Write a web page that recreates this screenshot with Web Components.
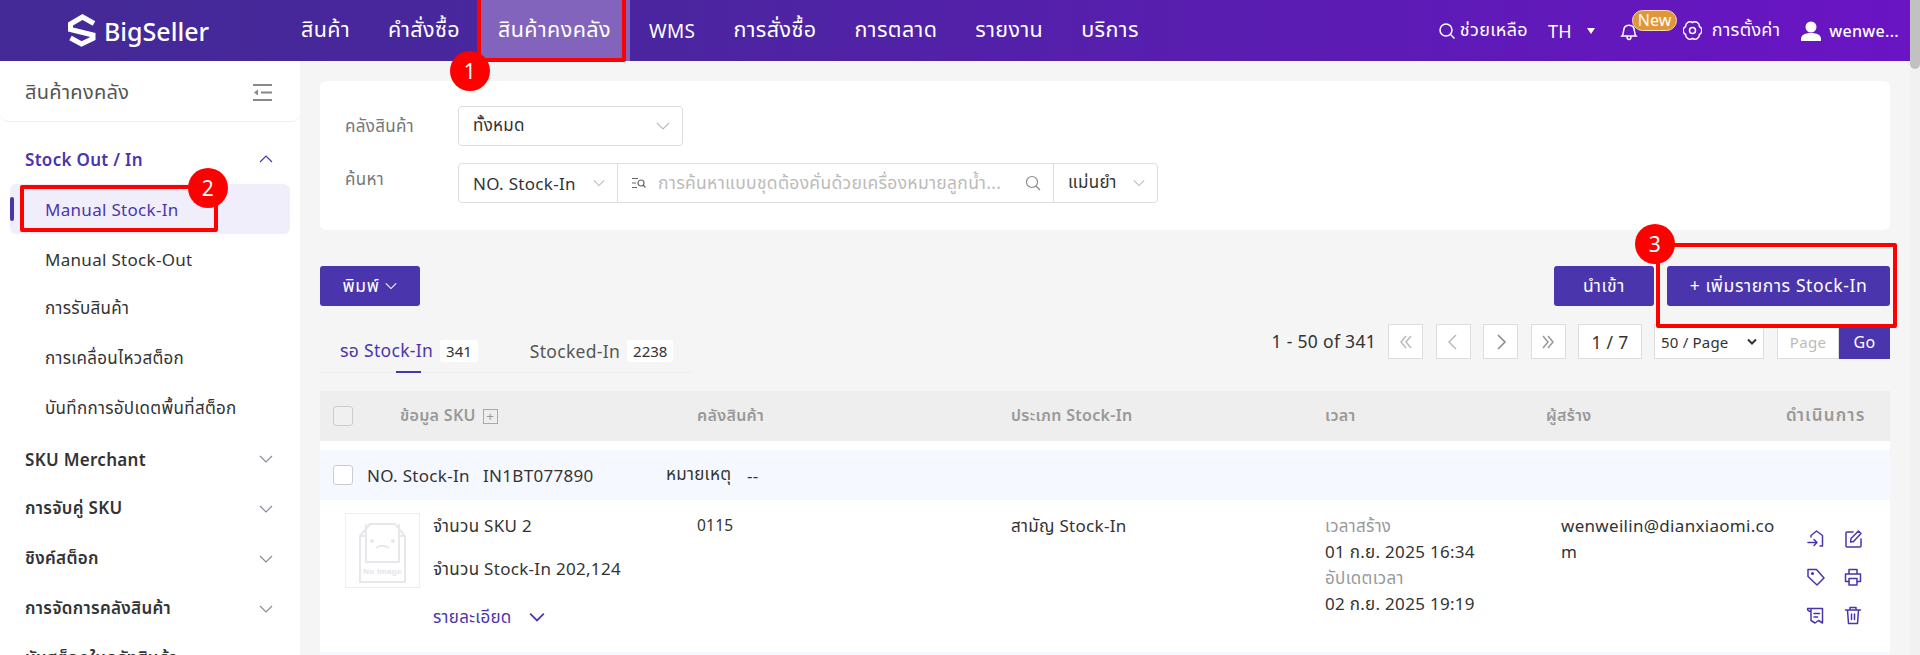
<!DOCTYPE html>
<html lang="th">
<head>
<meta charset="utf-8">
<title>BigSeller</title>
<style>
  html, body { margin: 0; height: 655px; overflow: hidden; }
  body { font-family: "Noto Sans", "Noto Sans Thai", Inter, sans-serif; font-size: 17px; letter-spacing: .3px; color: #333; background: #f5f5f5; }
  #app { display: flex; height: 655px; }
  #page { flex: 1; min-width: 0; display: flex; flex-direction: column; }
  #body { flex: 1; display: flex; min-height: 0; }
  #main { flex: 1; min-width: 0; padding: 20px 20px 0; display: flex; flex-direction: column; overflow: hidden; }
</style>
</head>
<body>
<div id="app">
  <div id="page">
    <top-bar></top-bar>
    <div id="body">
      <side-bar title="สินค้าคงคลัง">
        <side-group label="Stock Out / In" open></side-group>
        <side-item active>Manual Stock-In</side-item>
        <side-item>Manual Stock-Out</side-item>
        <side-item>การรับสินค้า</side-item>
        <side-item>การเคลื่อนไหวสต็อก</side-item>
        <side-item>บันทึกการอัปเดตพื้นที่สต็อก</side-item>
        <side-group label="SKU Merchant"></side-group>
        <side-group label="การจับคู่ SKU"></side-group>
        <side-group label="ชิงค์สต็อก"></side-group>
        <side-group label="การจัดการคลังสินค้า"></side-group>
        <side-group label="นับสต็อกในคลังสินค้า"></side-group>
      </side-bar>
      <div id="main">
        <filter-card></filter-card>
        <action-bar></action-bar>
        <tab-pager></tab-pager>
        <stock-table></stock-table>
      </div>
    </div>
  </div>
  <page-scrollbar></page-scrollbar>
</div>
<mark-box n="1" style="left:477px;top:-4px;width:149px;height:66px" cx="-7" cy="75"></mark-box>
<mark-box n="2" style="left:20px;top:185px;width:198px;height:47px" cx="188" cy="3"></mark-box>
<mark-box n="3" style="left:1656px;top:243px;width:241px;height:85px" cx="-1" cy="1"></mark-box>

<script>
const chevron = (size, color, up, sw = 1.2) => `<svg width="${size}" height="${size}" viewBox="0 0 14 14" fill="none" stroke="${color}" stroke-width="${sw}"><polyline points="${up ? "1,10 7,4 13,10" : "1,4 7,10 13,4"}"/></svg>`;

class TopBar extends HTMLElement {
    constructor() {
        super();
        this.attachShadow({ mode: "open" });
    }
    connectedCallback() {
        const links = ["สินค้า", "คำสั่งซื้อ", "สินค้าคงคลัง", "WMS", "การสั่งซื้อ", "การตลาด", "รายงาน", "บริการ"];
        this.shadowRoot.innerHTML = `
            <style>
                :host { display: flex; align-items: center; height: 61px; flex: none; color: #fff;
                    background: linear-gradient(90deg, #432a96 0%, #4b25a0 35%, #6a14c4 100%); }
                .logo { display: flex; align-items: center; gap: 7px; margin-left: 67px; width: 215px; flex: none; }
                .logo b { font-size: 25px; font-weight: 500; letter-spacing: 0; }
                nav { display: flex; height: 61px; align-items: center; font-size: 21.500px; letter-spacing: .4px; }
                nav a { display: flex; align-items: center; height: 61px; padding: 0 19px; white-space: nowrap; }
                nav a.on { background: #8264bd; }
                nav a.latin { font-size: 19px; }
                .right { margin-left: auto; display: flex; align-items: center; font-size: 18px; height: 61px; }
                .right span { display: flex; align-items: center; position: relative; white-space: nowrap; }
                .new { position: absolute; left: 12px; top: -11px; background: #e2963a; border: 1px solid #f5dcb8; border-radius: 11px; font-size: 16px; font-style: normal; letter-spacing: 0; padding: 0 5px; line-height: 19px; }
            </style>
            <div class="logo">
                <svg width="30" height="33" viewBox="0 0 30 33" fill="none" stroke="#fff" stroke-width="5">
                    <path d="M27 9.500 15.500 3 3.500 10v5.500L26 21v3.500L14.500 30 3.500 24"/>
                </svg>
                <b>BigSeller</b>
            </div>
            <nav>${links.map((t) => `<a class="${t === "สินค้าคงคลัง" ? "on" : t === "WMS" ? "latin" : ""}">${t}</a>`).join("")}</nav>
            <div class="right">
                <span style="gap:4px"><svg width="18" height="18" viewBox="0 0 18 18" fill="none" stroke="#fff" stroke-width="1.500"><circle cx="8" cy="8" r="6"/><path d="m12.500 12.500 4 4"/></svg>ช่วยเหลือ</span>
                <span style="margin-left:20px">TH</span>
                <span style="margin-left:14px"><svg width="10" height="8" viewBox="0 0 10 8" fill="#fff"><path d="M1 1h8L5 7z"/></svg></span>
                <span style="margin-left:24px"><svg width="18" height="20" viewBox="0 0 18 20" fill="none" stroke="#fff" stroke-width="1.500"><path d="M2 15c2-2 1-6 2.500-8.500C6 3.500 12 3.500 13.500 6.500 15 9 14 13 16 15zM7 15.500c0 4 4 4 4 0"/></svg><i class="new">New</i></span>
                <span style="margin-left:45px;gap:10px"><svg width="19" height="19" viewBox="0 0 19 19" fill="none" stroke="#fff" stroke-width="1.500"><path d="M9.500 1.500A4.500 4.500 0 0 1 16.400 5.500 4.500 4.500 0 0 1 16.400 13.500 4.500 4.500 0 0 1 9.500 17.500 4.500 4.500 0 0 1 2.600 13.500 4.500 4.500 0 0 1 2.600 5.500 4.500 4.500 0 0 1 9.500 1.500z"/><circle cx="9.500" cy="9.500" r="3"/></svg>การตั้งค่า</span>
                <span style="margin-left:20px;gap:7px;margin-right:11px"><svg width="22" height="22" viewBox="0 0 22 22" fill="#fff"><circle cx="11" cy="7" r="5.500"/><path d="M1 21v-2c0-4 4-6 10-6s10 2 10 6v2z"/></svg><b style="font-weight:500;font-size:16px">wenwe...</b></span>
            </div>`;
    }
}

class SideBar extends HTMLElement {
    constructor() {
        super();
        this.attachShadow({ mode: "open" });
    }
    connectedCallback() {
        this.shadowRoot.innerHTML = `
            <style>
                :host { display: block; width: 300px; flex: none; background: #fff; overflow: hidden; }
                header { display: flex; align-items: center; justify-content: space-between; height: 61px; padding: 3px 28px 0 25px;
                    border-bottom: 1px solid #eee; border-radius: 0 0 8px 8px; font-size: 20px; color: #555; box-sizing: border-box; }
                .list { padding: 12px 10px 0; }
            </style>
            <header>
                <span>${this.getAttribute("title")}</span>
                <svg width="19" height="17" viewBox="0 0 19 17" fill="none" stroke="#888" stroke-width="2"><path d="M0 1h19M8 8.500h11M0 16h19"/><path d="M5 5.500v6L1 8.500z" fill="#888" stroke="none"/></svg>
            </header>
            <div class="list"><slot></slot></div>`;
    }
}

class SideGroup extends HTMLElement {
    constructor() {
        super();
        this.attachShadow({ mode: "open" });
    }
    connectedCallback() {
        const open = this.hasAttribute("open");
        this.shadowRoot.innerHTML = `
            <style>
                :host { display: flex; align-items: center; justify-content: space-between; height: 50px; padding: 0 17px 0 15px;
                    font-weight: 600; font-size: 17px; letter-spacing: .3px; color: ${open ? "#4b35ad" : "#333"}; }
            </style>
            <span>${this.getAttribute("label")}</span>
            ${chevron(14, open ? "#4b35ad" : "#8a8a99", open)}`;
    }
}

class SideItem extends HTMLElement {
    constructor() {
        super();
        this.attachShadow({ mode: "open" });
    }
    connectedCallback() {
        this.shadowRoot.innerHTML = `
            <style>
                :host { display: flex; align-items: center; height: 50px; padding-left: 35px; border-radius: 6px; font-size: 17px; position: relative; color: #333; }
                :host([active]) { background: #f1eefb; color: #4b35ad; }
                :host([active])::before { content: ""; position: absolute; left: 0; top: 13px; width: 4px; height: 24px; background: #4b35ad; border-radius: 2px; }
            </style>
            <slot></slot>`;
    }
}

class FilterCard extends HTMLElement {
    constructor() {
        super();
        this.attachShadow({ mode: "open" });
    }
    connectedCallback() {
        this.shadowRoot.innerHTML = `
            <style>
                :host { display: block; flex: none; background: #fff; border-radius: 6px; height: 149px; padding: 25px 25px 0; box-sizing: border-box; font-size: 17px; }
                .row { display: flex; height: 40px; margin-bottom: 17px; }
                label { width: 113px; color: #777; line-height: 40px; }
                .row + .row label { line-height: 32px; }
                .box { display: flex; align-items: center; border: 1px solid #ddd; border-radius: 4px; box-sizing: border-box; height: 40px; color: #333; }
                .seg { display: flex; align-items: center; justify-content: space-between; height: 100%; padding: 0 12px 0 14px; box-sizing: border-box; white-space: nowrap; }
                .seg + .seg { border-left: 1px solid #ddd; }
                .ph { color: #bbb; font-size: 17.500px; white-space: nowrap; overflow: hidden; text-overflow: ellipsis; margin: 0 auto 0 12px; width: 352px; }
            </style>
            <div class="row">
                <label>คลังสินค้า</label>
                <div class="box" style="width:225px"><div class="seg" style="width:100%">ทั้งหมด ${chevron(14, "#bbb")}</div></div>
            </div>
            <div class="row">
                <label>ค้นหา</label>
                <div class="box" style="width:700px">
                    <div class="seg" style="width:158px">NO. Stock-In ${chevron(12, "#bbb")}</div>
                    <div class="seg" style="width:436px">
                        <svg width="14" height="12" viewBox="0 0 14 12" fill="none" stroke="#666" stroke-width="1.200" style="flex:none"><path d="M0 1.500h6M0 6h4M0 10.500h5"/><circle cx="9" cy="6" r="3"/><path d="m11 8 2.500 2.500"/></svg>
                        <span class="ph">การค้นหาแบบชุดต้องคั่นด้วยเครื่องหมายลูกน้ำ...</span>
                        <svg width="16" height="16" viewBox="0 0 16 16" fill="none" stroke="#888" stroke-width="1.200" style="flex:none"><circle cx="7" cy="7" r="5.500"/><path d="m11 11 4 4"/></svg>
                    </div>
                    <div class="seg" style="flex:1">แม่นยำ ${chevron(12, "#bbb")}</div>
                </div>
            </div>`;
    }
}

class ActionBar extends HTMLElement {
    constructor() {
        super();
        this.attachShadow({ mode: "open" });
    }
    connectedCallback() {
        this.shadowRoot.innerHTML = `
            <style>
                :host { display: flex; flex: none; margin-top: 36px; height: 40px; gap: 13px; }
                button { font: inherit; font-size: 17.500px; letter-spacing: .6px; color: #fff; background: #4b35ad; border: 0; border-radius: 3px; height: 40px; display: flex; align-items: center; justify-content: center; gap: 6px; padding: 0; }
            </style>
            <button style="width:100px;margin-right:auto">พิมพ์ ${chevron(12, "#fff")}</button>
            <button style="width:100px">นำเข้า</button>
            <button style="width:223px">+ เพิ่มรายการ Stock-In</button>`;
    }
}

class TabPager extends HTMLElement {
    constructor() {
        super();
        this.attachShadow({ mode: "open" });
    }
    connectedCallback() {
        const arrow = (p, c) => `<i class="b"><svg width="16" height="18" viewBox="0 0 16 18" fill="none" stroke="${c}" stroke-width="1.500"><path d="${p}"/></svg></i>`;
        this.shadowRoot.innerHTML = `
            <style>
                :host { display: flex; flex: none; justify-content: space-between; height: 85px; font-size: 17.500px; position: relative; }
                .tabs { display: flex; width: 373px; height: 67px; box-sizing: border-box; border-bottom: 1px solid #eee; padding: 33px 0 0 20px; position: relative; }
                .tab { display: flex; align-items: center; height: 24px; gap: 7px; color: #555; white-space: nowrap; }
                .tab.on { color: #4b35ad; margin-right: 52px; }
                .tab em { font-style: normal; color: #333; background: #fff; border-radius: 3px; font-size: 15px; letter-spacing: 0; padding: 0 6px; line-height: 22px; }
                .bar { position: absolute; left: 76px; bottom: -1px; width: 25px; height: 2px; background: #4b35ad; }
                .pager { display: flex; align-items: flex-start; padding-top: 18px; }
                .b { box-sizing: border-box; display: flex; align-items: center; justify-content: center; width: 35px; height: 35px; border: 1px solid #ddd; background: #fff; margin-right: 12.500px; font-style: normal; }
                .txt { line-height: 35px; margin-right: 12px; color: #333; white-space: nowrap; }
            </style>
            <div class="tabs">
                <div class="tab on">รอ Stock-In <em>341</em></div>
                <div class="tab">Stocked-In <em>2238</em></div>
                <div class="bar"></div>
            </div>
            <div class="pager">
                <span class="txt">1 - 50 of 341</span>
                ${arrow("M8 3 3 9l5 6M13 3 8 9l5 6", "#bbb")}
                ${arrow("M11 2 4 9l7 7", "#bbb")}
                ${arrow("M5 2l7 7-7 7", "#888")}
                ${arrow("M3 3l5 6-5 6M8 3l5 6-5 6", "#999")}
                <i class="b" style="width:64px;margin-right:12px">1 / 7</i>
                <i class="b" style="width:110px;font-size:15px;letter-spacing:.2px;justify-content:space-between;padding:0 6px;margin-right:13px">50 / Page <svg width="10" height="8" viewBox="0 0 10 8" fill="none" stroke="#333" stroke-width="2"><path d="m1 1.500 4 4 4-4"/></svg></i>
                <i class="b" style="width:62px;color:#bbb;font-size:15px;margin:0">Page</i>
                <i class="b" style="width:51px;margin:0;background:#4b35ad;border:0;color:#fff;font-size:16px">Go</i>
            </div>`;
    }
}

class StockTable extends HTMLElement {
    constructor() {
        super();
        this.attachShadow({ mode: "open" });
    }
    connectedCallback() {
        const icon = (inner) => `<svg width="20" height="20" viewBox="0 0 20 20" fill="none" stroke="#4b35ad" stroke-width="1.500" stroke-linejoin="round" stroke-linecap="round">${inner}</svg>`;
        this.shadowRoot.innerHTML = `
            <style>
                :host { display: block; flex: 1; background: #fff; font-size: 17px; }
                .cols { display: grid; grid-template-columns: 377px 314px 314px 221px 240px 104px; }
                .head { height: 50px; align-items: center; background: #eee; color: #999; font-weight: 600; font-size: 16px; white-space: nowrap; }
                .chk { box-sizing: border-box; display: inline-block; width: 20px; height: 20px; background: #fff; border: 1px solid #ccc; border-radius: 3px; flex: none; }
                .head .chk { background: #f0f0f0; }
                .sku { display: flex; align-items: center; padding-left: 13px; }
                .plus { box-sizing: border-box; width: 15px; height: 15px; border: 1px solid #aaa; margin-left: 7px; display: flex; align-items: center; justify-content: center; font: 13px/1 "Liberation Sans", sans-serif; color: #999; }
                .sub { display: flex; align-items: center; height: 50px; margin-top: 9px; background: #f5f8fe; padding-left: 13px; }
                .sub span { white-space: nowrap; }
                .row { height: 152px; border-bottom: 3px solid #f5f8fe; }
                .info { display: flex; padding: 13px 0 0 25px; }
                .thumb { box-sizing: border-box; width: 75px; height: 75px; border: 1px solid #eee; margin-right: 13px; flex: none; }
                .l { line-height: 26px; height: 26px; white-space: nowrap; }
                .cell { padding-top: 14px; }
                .muted { color: #999; }
                .more { color: #4b35ad; display: flex; align-items: center; gap: 17px; margin-top: 22px; }
                .ops { display: grid; grid-template-columns: 20px 20px; gap: 18px 17px; padding: 29px 0 0 20px; align-content: start; }
            </style>
            <div class="cols head">
                <div class="sku"><i class="chk"></i><span style="margin-left:47px">ข้อมูล SKU</span><i class="plus" style="font-style:normal">+</i></div>
                <div>คลังสินค้า</div>
                <div>ประเภท Stock-In</div>
                <div>เวลา</div>
                <div>ผู้สร้าง</div>
                <div style="font-size:17px;letter-spacing:1.200px">ดำเนินการ</div>
            </div>
            <div class="sub">
                <i class="chk"></i>
                <span style="margin-left:14px;width:116px">NO. Stock-In</span>
                <span style="width:183px">IN1BT077890</span>
                <span style="width:81px">หมายเหตุ</span>
                <span>--</span>
            </div>
            <div class="cols row">
                <div class="info">
                    <div class="thumb">
                        <svg width="73" height="73" viewBox="0 0 73 73" fill="none" stroke="#e8e8ec" stroke-width="2">
                            <path d="M14 22 24 10h25l10 12v46H14zM14 22h6v-12M59 22h-6v-12M20 10v38h33V10"/>
                            <path d="M30 34c3-3 9-3 13 0"/>
                            <circle cx="26" cy="27" r="1" fill="#e8e8ec"/><circle cx="47" cy="27" r="1" fill="#e8e8ec"/>
                            <text x="36.500" y="60" text-anchor="middle" font-size="8" fill="#e4e4e8" stroke="none" font-family="Liberation Sans, sans-serif" font-weight="700">No Image</text>
                        </svg>
                    </div>
                    <div>
                        <div class="l">จำนวน SKU 2</div>
                        <div class="l" style="margin-top:17px">จำนวน Stock-In 202,124</div>
                        <div class="l more">รายละเอียด ${chevron(16, "#4b35ad", false, 1.500)}</div>
                    </div>
                </div>
                <div class="cell" style="font-size:15.500px;letter-spacing:.2px">0115</div>
                <div class="cell">สามัญ Stock-In</div>
                <div class="cell" style="padding-top:13px">
                    <div class="l muted">เวลาสร้าง</div>
                    <div class="l">01 ก.ย. 2025 16:34</div>
                    <div class="l muted">อัปเดตเวลา</div>
                    <div class="l">02 ก.ย. 2025 19:19</div>
                </div>
                <div class="cell" style="padding-left:15px;word-break:break-all;line-height:26px;width:232px;box-sizing:border-box;padding-top:13px">wenweilin@dianxiaomi.com</div>
                <div class="ops">
                    ${icon('<path d="M5 8V6.500L10.500 2l6 4.500V17H14"/><path d="M2 13.500h9M8 10.500l3 3-3 3"/>')}
                    ${icon('<path d="M10 3H4a1 1 0 0 0-1 1v13a1 1 0 0 0 1 1h13a1 1 0 0 0 1-1v-7"/><path d="M7.500 13 8 9.500 15.500 2l2.500 2.500-7.500 8z"/>')}
                    ${icon('<path d="M2 2.500h8.500L18 11l-7 7-9-8.500z"/><circle cx="6.500" cy="6.500" r=".8"/>')}
                    ${icon('<path d="M6 7V2.500h8V7M6 14.500H2.500V7h15v7.500H14"/><path d="M6 11.500h8V18H6z"/>')}
                    ${icon('<path d="M1.500 3.500h15V18l-4-2.500L9 18l-4-2.500V3.500M1.500 3.500c0 2 1 3 3.500 3"/><path d="M8 8.500h5.500M8 12h3.500"/>')}
                    ${icon('<path d="M2.500 5h15M7 5V2.500h6V5M4.500 5l1 13.500h9l1-13.500M8.500 9v5.500M11.500 9v5.500"/>')}
                </div>
            </div>`;
    }
}

class PageScrollbar extends HTMLElement {
    constructor() {
        super();
        this.attachShadow({ mode: "open" });
    }
    connectedCallback() {
        this.shadowRoot.innerHTML = `
            <style>
                :host { display: block; width: 10px; flex: none; background: #f1f1f1; }
                div { height: 69px; background: #c1c1c1; border-radius: 0 0 5px 5px; }
            </style>
            <div></div>`;
    }
}

// red callouts drawn on top of the screenshot
class MarkBox extends HTMLElement {
    constructor() {
        super();
        this.attachShadow({ mode: "open" });
    }
    connectedCallback() {
        const cx = this.getAttribute("cx");
        const cy = this.getAttribute("cy");
        this.shadowRoot.innerHTML = `
            <style>
                :host { display: block; position: absolute; box-sizing: border-box; border: 4px solid #fe0000; border-radius: 2px; }
                b { position: absolute; left: ${cx - 24}px; top: ${cy - 24}px; width: 40px; height: 40px; border-radius: 50%; background: #fe0000; color: #fff;
                    font: 400 21px/40px "Noto Sans", sans-serif; text-align: center; }
            </style>
            <b>${this.getAttribute("n")}</b>`;
    }
}

customElements.define("top-bar", TopBar);
customElements.define("side-bar", SideBar);
customElements.define("side-group", SideGroup);
customElements.define("side-item", SideItem);
customElements.define("filter-card", FilterCard);
customElements.define("action-bar", ActionBar);
customElements.define("tab-pager", TabPager);
customElements.define("stock-table", StockTable);
customElements.define("page-scrollbar", PageScrollbar);
customElements.define("mark-box", MarkBox);
</script>
</body>
</html>
